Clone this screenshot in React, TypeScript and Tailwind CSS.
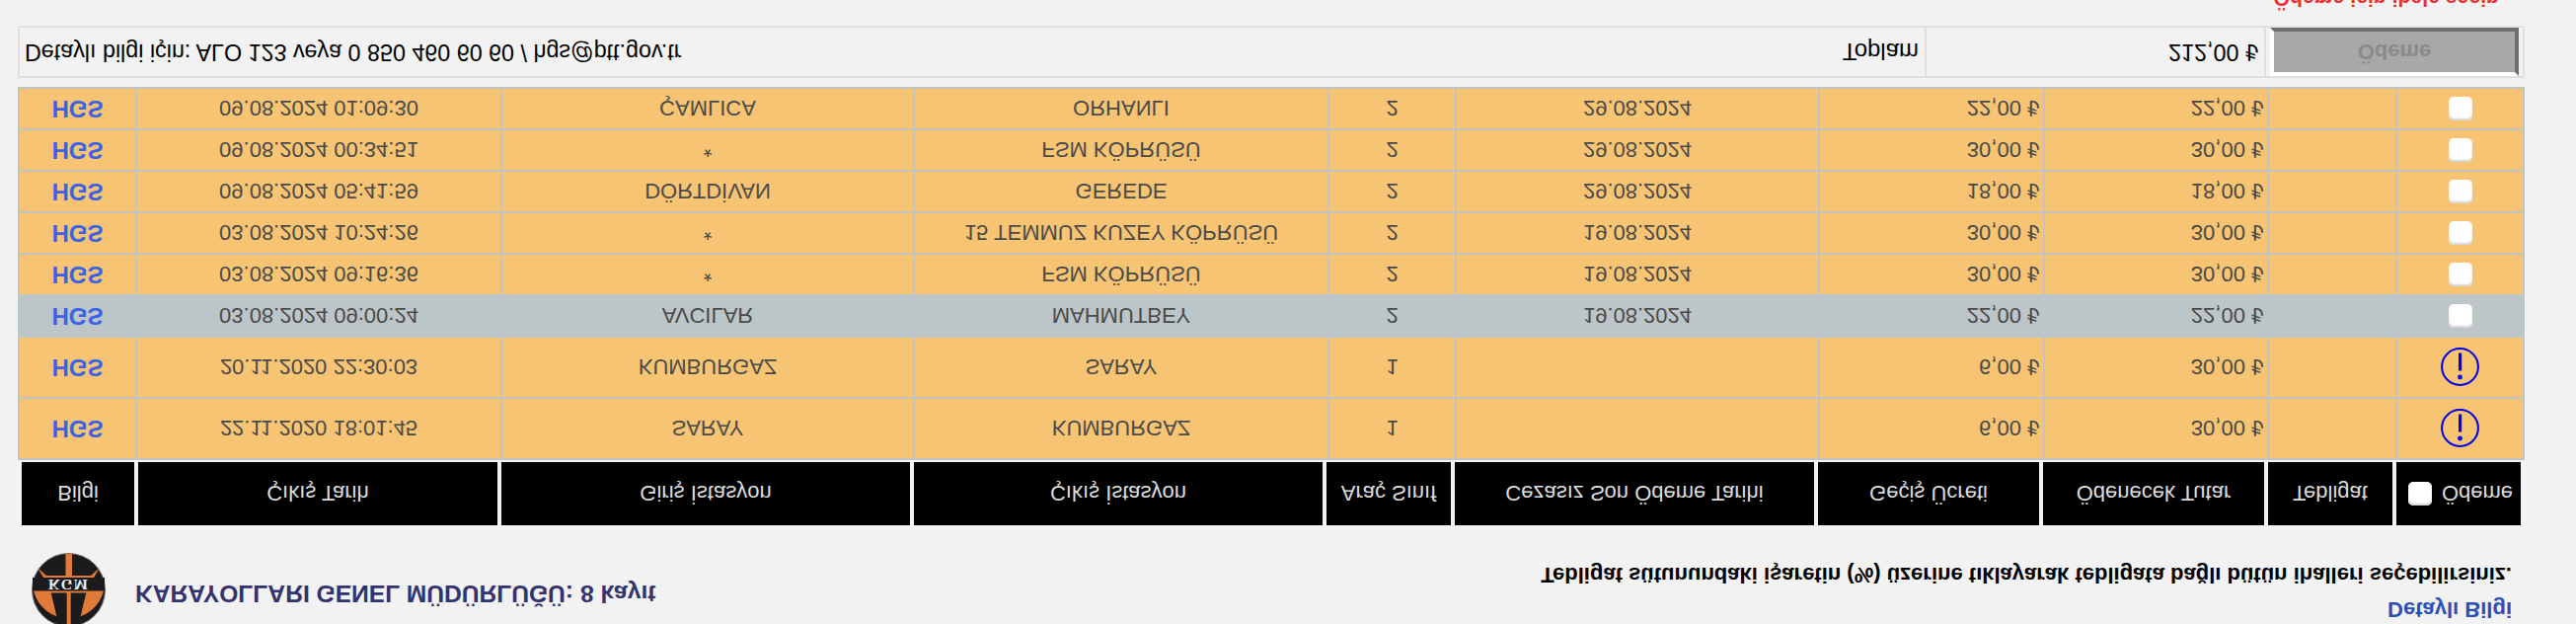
import React from "react";

const rowCols = "grid grid-cols-[119px_370px_418px_420px_129px_368px_228px_227px_130px_131px]";
const headCols = "grid grid-cols-[114px_364px_414px_414px_126px_364px_224px_224px_126px_126px] gap-x-1";

type Row = {
  date: string; from: string; to: string; cls: string; due: string; fee: string; pay: string;
  tall?: boolean; gray?: boolean; grayTop?: boolean;
};

const rows: Row[] = [
  { date: "22.11.2020 18:01:45", from: "SARAY", to: "KUMBURGAZ", cls: "1", due: "", fee: "6,00 ₺", pay: "30,00 ₺", tall: true },
  { date: "20.11.2020 22:30:03", from: "KUMBURGAZ", to: "SARAY", cls: "1", due: "", fee: "6,00 ₺", pay: "30,00 ₺", tall: true },
  { date: "03.08.2024 09:00:24", from: "AVCILAR", to: "MAHMUTBEY", cls: "2", due: "19.08.2024", fee: "22,00 ₺", pay: "22,00 ₺", gray: true },
  { date: "03.08.2024 09:16:36", from: "*", to: "FSM KÖPRÜSÜ", cls: "2", due: "19.08.2024", fee: "30,00 ₺", pay: "30,00 ₺", grayTop: true },
  { date: "03.08.2024 10:24:26", from: "*", to: "15 TEMMUZ KUZEY KÖPRÜSÜ", cls: "2", due: "19.08.2024", fee: "30,00 ₺", pay: "30,00 ₺" },
  { date: "09.08.2024 05:41:59", from: "DÖRTDİVAN", to: "GEREDE", cls: "2", due: "29.08.2024", fee: "18,00 ₺", pay: "18,00 ₺" },
  { date: "09.08.2024 00:34:51", from: "*", to: "FSM KÖPRÜSÜ", cls: "2", due: "29.08.2024", fee: "30,00 ₺", pay: "30,00 ₺" },
  { date: "09.08.2024 01:09:30", from: "ÇAMLICA", to: "ORHANLI", cls: "2", due: "29.08.2024", fee: "22,00 ₺", pay: "22,00 ₺" },
];

const headers = ["Bilgi", "Çıkış Tarih", "Giriş İstasyon", "Çıkış İstasyon", "Araç Sınıf", "Cezasız Son Ödeme Tarihi", "Geçiş Ücreti", "Ödenecek Tutar", "Tebligat"];

function Logo() {
  return (
    <svg width="75" height="75" viewBox="0 0 75 75" className="-mt-[3px] shrink-0">
      <circle cx="37.5" cy="37.5" r="37" fill="#1b1a1d" stroke="#77706a" strokeWidth="1" />
      <path d="M2 36.7 A36.5 36.5 0 0 1 73 36.7 Z" fill="#df7a38" />
      <path d="M19.7 34.5 L55.3 34.5 L47 0 L28 0 Z" fill="#1b1a1d" />
      <rect x="35.7" y="0" width="4" height="35" fill="#df7a38" />
      <rect x="1" y="36.7" width="73" height="13.3" fill="#1b1a1d" />
      <path d="M6 60 L12 50 L63 50 L69 60 L60 52 L41 52 L41 74 L34.5 74 L34.5 52 L15 52 Z" fill="#df7a38" />
      <text x="37.5" y="47.8" textAnchor="middle" fill="#f0f0f0" fontSize="15" fontWeight="700" fontFamily="'Liberation Serif', serif" letterSpacing="1.2">KGM</text>
    </svg>
  );
}

function Warn() {
  return (
    <svg width="39" height="39" viewBox="0 0 39 39">
      <circle cx="19.5" cy="19.5" r="18.4" fill="none" stroke="#0000ee" strokeWidth="2" />
      <circle cx="19.5" cy="9" r="2.4" fill="#0000ee" />
      <rect x="18" y="15.5" width="3.2" height="18" fill="#0000ee" />
    </svg>
  );
}

function Box() {
  return <input type="checkbox" readOnly className="h-6 w-6 appearance-none rounded-[5px] bg-white shadow-[inset_0_2px_2px_#d4d4d4]" />;
}

export default function App() {
  return (
    <div className="h-[632px] w-[2610px] -scale-y-100 overflow-hidden bg-[#f2f2f2] [font-family:'Liberation_Sans',Arial,sans-serif]">
      <div className="flex h-[100px] justify-between pl-8 pr-[65px]">
        <div className="flex items-start gap-[30px]">
          <Logo />
          <div className="mt-[17px] text-[24.6px] leading-[28px] font-bold text-[#33336f]">KARAYOLLARI GENEL MÜDÜRLÜĞÜ: 8 kayıt</div>
        </div>
        <div className="text-right font-bold">
          <div className="mt-[2px] text-[22px] leading-[26px] text-[#2a50b8]">Detaylı Bilgi</div>
          <div className="mt-[9px] text-[22px] leading-[26px] text-black">Tebligat sütunundaki işaretin (%) üzerine tıklayarak tebligata bağlı bütün ihalleri seçebilirsiniz.</div>
        </div>
      </div>

      <div className={`${headCols} ml-[22px] h-16 w-[2532px] text-[22px] text-[#dddddd]`}>
        {headers.map((h) => (
          <div key={h} className="flex items-center justify-center bg-black">{h}</div>
        ))}
        <div className="flex items-center justify-center gap-[10px] bg-black pl-[4px]">
          <Box />
          <span>Ödeme</span>
        </div>
      </div>

      <div className="mt-[2px] ml-[18px] w-[2540px] border-b-2 border-[#c3c3c3] text-[22px] text-[#4a4a4a]">
        {rows.map((r, i) => {
          const edge = r.gray ? "border-[#c0c7ca]" : "border-[#c3c3c3]";
          const top = r.gray || r.grayTop ? "border-t-[#bcc5c8]" : "border-t-[#c3c3c3]";
          return (
            <div
              key={i}
              className={`${rowCols} border-t-2 ${top} ${r.tall ? "h-[62px]" : "h-[42px]"} ${r.gray ? "bg-[#bcc5c8]" : "bg-[#f6c473]"}`}
            >
              <div className={`flex items-center justify-center border-l-2 ${edge} text-[24px] font-bold text-[#3c62e6]`}>HGS</div>
              <div className={`flex items-center justify-center border-l-2 ${edge}`}>{r.date}</div>
              <div className={`flex items-center justify-center border-l-2 ${edge}`}>{r.from}</div>
              <div className={`flex items-center justify-center border-l-2 ${edge}`}>{r.to}</div>
              <div className={`flex items-center justify-center border-l-2 ${edge}`}>{r.cls}</div>
              <div className={`flex items-center justify-center border-l-2 ${edge}`}>{r.due}</div>
              <div className={`flex items-center justify-end border-l-2 pr-[3px] ${edge}`}>{r.fee}</div>
              <div className={`flex items-center justify-end border-l-2 pr-[3px] ${edge}`}>{r.pay}</div>
              <div className={`border-l-2 ${edge}`} />
              <div className={`flex items-center justify-center border-x-2 ${edge}`}>{r.tall ? <Warn /> : <Box />}</div>
            </div>
          );
        })}
      </div>

      <div className="mt-[9px] ml-[18px] flex h-[53px] w-[2540px] border-2 border-[#e3dfdf] text-[23.3px] text-black">
        <div className="flex flex-1 items-center pl-[5px]">Detaylı bilgi için: ALO 123 veya 0 850 460 60 60 / hgs@ptt.gov.tr</div>
        <div className="flex items-center pr-[6px] text-[24px]">Toplam</div>
        <div className="flex w-[346px] items-center justify-end border-x-2 border-[#e3dfdf] pr-[6px] text-[23.4px]">212,00 ₺</div>
        <div className="mx-[4px] flex w-[252px] items-center justify-center border-[4px] border-t-white border-r-[#6f6f6f] border-b-[#6f6f6f] border-l-white bg-[#a8a8a8] text-[22px] font-bold text-[#8a8a8a]">Ödeme</div>
      </div>

      <div className="mt-[12px] flex justify-end pr-[78px] text-[21.2px] font-bold text-[#f03030]">Ödeme için ihale seçin</div>
    </div>
  );
}
